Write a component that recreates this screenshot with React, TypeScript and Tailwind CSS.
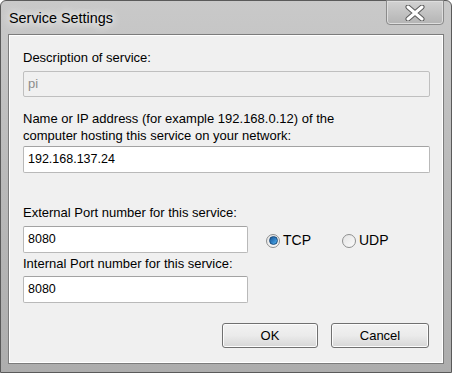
import React from 'react';

const font = "font-['Liberation_Sans',Arial,sans-serif]";

const Field: React.FC<{ value: string; disabled?: boolean; className?: string }> = ({ value, disabled, className }) => (
  <div
    className={`flex items-center pl-[4px] text-[12.5px] border rounded-[2px] ${disabled
      ? 'bg-[#f0f0f0] border-[#bfbfbf] text-[#8c8c8c]'
      : 'bg-white border-[#b9b9b9] border-t-[#a3a3a3] text-black'
      } ${className ?? ''}`}
  >
    {value}
  </div>
);

const Radio: React.FC<{ label: string; checked?: boolean }> = ({ label, checked }) => (
  <div className="flex items-center gap-[3px] text-[14px] text-black">
    <div className="w-[14px] h-[14px] rounded-full border border-[#8e8f8f] bg-gradient-to-br from-[#e4e4e4] to-[#fbfbfb] flex items-center justify-center">
      {checked && (
        <div className="w-[9px] h-[9px] rounded-full bg-gradient-to-br from-[#1b5690] via-[#2f7fc4] to-[#56b4ee] border border-[#174a7c]" />
      )}
    </div>
    <span>{label}</span>
  </div>
);

const Button: React.FC<{ label: string; className?: string }> = ({ label, className }) => (
  <button
    className={`h-[25px] rounded-[3px] border border-[#707070] bg-gradient-to-b from-[#f2f2f2] via-[#ebebeb] to-[#d6d6d6] text-[13px] text-black shadow-[inset_0_0_0_1px_#fcfcfc] ${className ?? ''}`}
  >
    {label}
  </button>
);

export default function App() {
  return (
    <div className={`w-[452px] h-[373px] ${font} bg-white`}>
      <div className="w-[452px] h-[373px] flex flex-col rounded-t-[6px] border border-[#5a5a5a] bg-gradient-to-b from-[#c9c9c9] via-[#b9b9b9] to-[#adadad]">
        <div className="h-[33px] flex items-start justify-between pl-[8px] pr-[7px]">
          <span className="mt-[7px] text-[14.4px] text-black [text-shadow:0_0_8px_#ffffff,0_0_12px_#ffffff]">Service Settings</span>
          <div className="-mt-[1px] w-[58px] h-[25px] rounded-b-[4px] border border-[#8b8b8b] bg-gradient-to-b from-[#d2d2d2] to-[#b4b4b4] shadow-[inset_0_0_0_1px_#dedede] flex items-center justify-center">
            <svg width="20" height="16" viewBox="0 0 20 16">
              <path d="M3 2 L17 14 M17 2 L3 14" stroke="#5b5b5b" strokeWidth="5" strokeLinecap="round" />
              <path d="M3 2 L17 14 M17 2 L3 14" stroke="#ffffff" strokeWidth="3" strokeLinecap="round" />
            </svg>
          </div>
        </div>
        <div className="mx-[7px] h-[330px] border border-[#7c7c7c] bg-[#f0f0f0] shadow-[inset_0_0_0_1px_#ffffff] pl-[14px] pr-[13px] pt-[15px] text-[13px] text-black">
          <div className="leading-[16px]">Description of service:</div>
          <Field value="pi" disabled className="mt-[5px] h-[26px] text-[13px]" />
          <div className="mt-[13px] leading-[17px]">
            Name or IP address (for example 192.168.0.12) of the
            <br />
            computer hosting this service on your network:
          </div>
          <Field value="192.168.137.24" className="mt-[2px] h-[27px]" />
          <div className="mt-[32px] leading-[16px]">External Port number for this service:</div>
          <div className="mt-[5px] flex items-center">
            <Field value="8080" className="w-[225px] h-[27px]" />
            <div className="ml-[18px] mt-[2px] flex items-center gap-[31px]">
              <Radio label="TCP" checked />
              <Radio label="UDP" />
            </div>
          </div>
          <div className="mt-[3px] leading-[16px]">Internal Port number for this service:</div>
          <Field value="8080" className="mt-[4px] w-[225px] h-[27px]" />
          <div className="mt-[20px] flex justify-end gap-[13px] pr-[1px]">
            <Button label="OK" className="w-[96px]" />
            <Button label="Cancel" className="w-[98px]" />
          </div>
        </div>
      </div>
    </div>
  );
}
